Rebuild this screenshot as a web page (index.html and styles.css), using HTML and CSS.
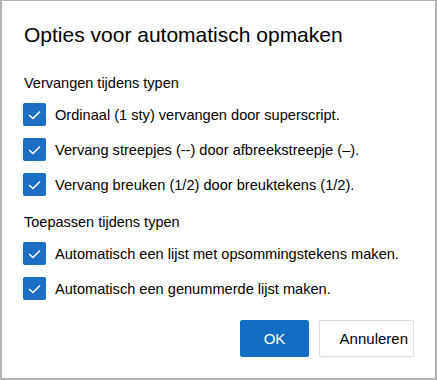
FILE: index.html
```html
<!DOCTYPE html>
<html lang="nl">
<head>
    <meta charset="UTF-8">
    <meta name="viewport" content="width=device-width, initial-scale=1.0">
    <title>Opties voor automatisch opmaken</title>
    <link rel="stylesheet" href="styles.css">
</head>
<body>
    <div class="dialog">
        <h1>Opties voor automatisch opmaken</h1>

        <div class="group">
            <div class="group-title">Vervangen tijdens typen</div>
            <label class="option">
                <span class="box"><svg viewBox="0 0 23 23"><polyline points="6,12 10,15.5 17,8.5"/></svg></span>
                <span>Ordinaal (1 sty) vervangen door superscript.</span>
            </label>
            <label class="option">
                <span class="box"><svg viewBox="0 0 23 23"><polyline points="6,12 10,15.5 17,8.5"/></svg></span>
                <span>Vervang streepjes (--) door afbreekstreepje (–).</span>
            </label>
            <label class="option">
                <span class="box"><svg viewBox="0 0 23 23"><polyline points="6,12 10,15.5 17,8.5"/></svg></span>
                <span>Vervang breuken (1/2) door breuktekens (1/2).</span>
            </label>
        </div>

        <div class="group">
            <div class="group-title">Toepassen tijdens typen</div>
            <label class="option">
                <span class="box"><svg viewBox="0 0 23 23"><polyline points="6,12 10,15.5 17,8.5"/></svg></span>
                <span>Automatisch een lijst met opsommingstekens maken.</span>
            </label>
            <label class="option">
                <span class="box"><svg viewBox="0 0 23 23"><polyline points="6,12 10,15.5 17,8.5"/></svg></span>
                <span>Automatisch een genummerde lijst maken.</span>
            </label>
        </div>

        <div class="actions">
            <button class="btn primary">OK</button>
            <button class="btn">Annuleren</button>
        </div>
    </div>
</body>
</html>
```

FILE: styles.css
```css
body {
    margin: 0;
    font-family: 'Liberation Sans', Arial, sans-serif;
    color: #000;
    background: #fff;
}

.dialog {
    width: 437px;
    height: 380px;
    box-sizing: border-box;
    border: 2px solid #b3b3b3;
    border-top-width: 1px;
    padding: 18px 21px 0 19px;
}

h1 {
    font-size: 21px;
    font-weight: normal;
    margin: 0 0 0 3px;
    line-height: 32px;
}

.group {
    margin-top: 20px;
}

.group + .group {
    margin-top: 8px;
}

.group-title {
    font-size: 14.5px;
    line-height: 24px;
    margin-left: 3px;
    margin-bottom: 2px;
}

.option {
    display: flex;
    align-items: center;
    gap: 9px;
    height: 35px;
    font-size: 14.6px;
}

.box {
    width: 23px;
    height: 23px;
    margin-left: 2px;
    border-radius: 2px;
    background: #1b6ec2;
    display: flex;
    flex-shrink: 0;
}

.box svg {
    width: 23px;
    height: 23px;
    fill: none;
    stroke: #fff;
    stroke-width: 1.6;
}

.actions {
    display: flex;
    justify-content: flex-end;
    gap: 10px;
    margin-top: 14px;
}

.btn {
    font-family: inherit;
    font-size: 15px;
    width: 95px;
    height: 37px;
    padding: 0 5px 0 0;
    border: 1px solid #dcdcdc;
    border-radius: 2px;
    background: #fff;
    color: #000;
    text-align: right;
}

.btn.primary {
    width: 69px;
    background: #116ec2;
    border-color: #116ec2;
    color: #fff;
    padding: 0;
    text-align: center;
}
```
